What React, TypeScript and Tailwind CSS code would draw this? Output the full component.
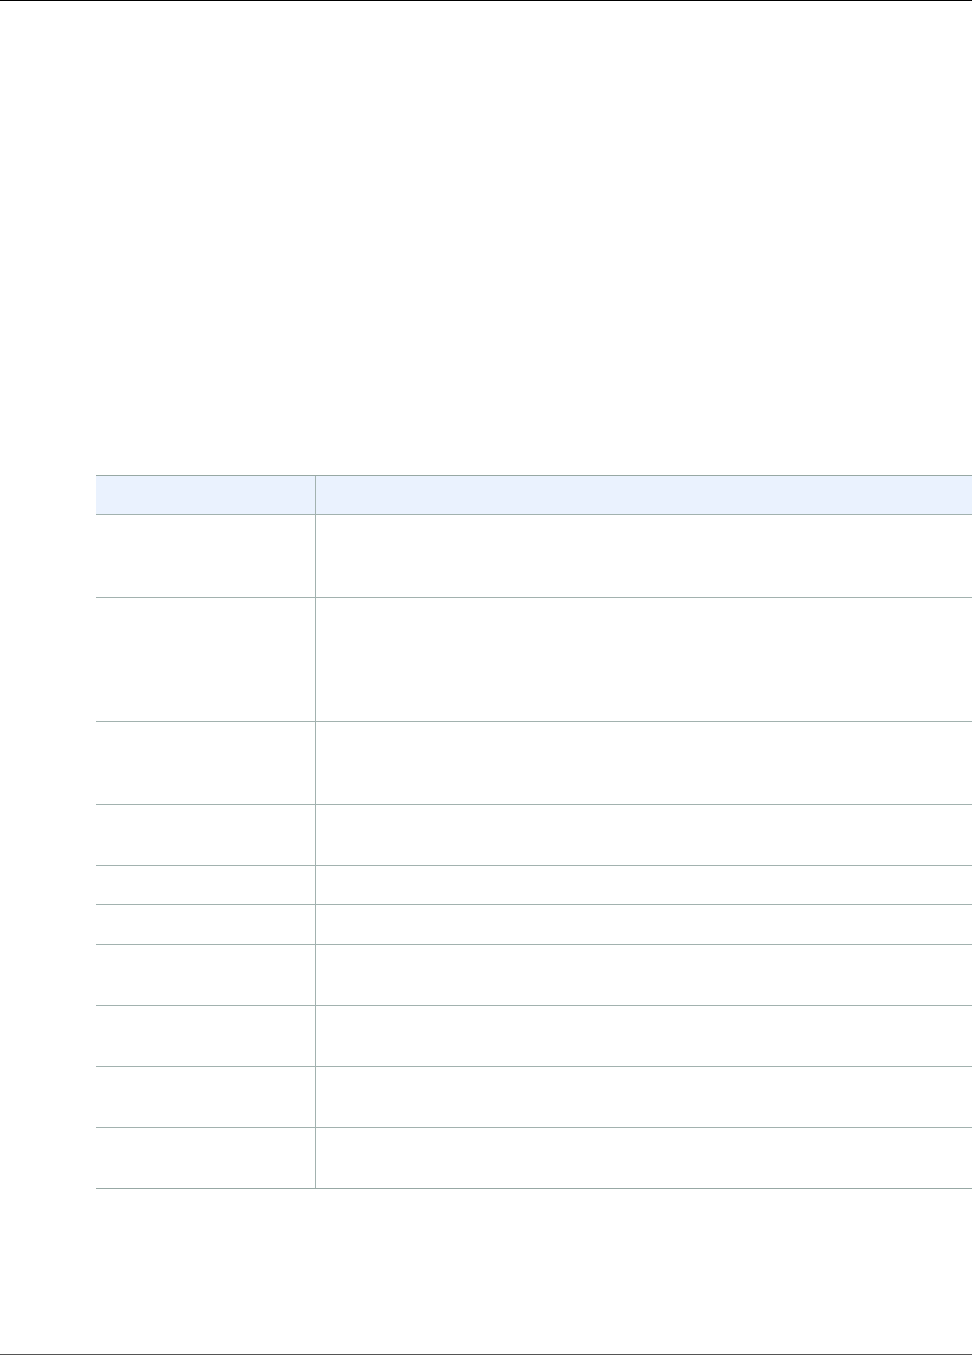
const rows = [83, 124, 83, 61, 39, 40, 61, 61, 61, 61];

const App = () => {
  return (
    <div className="flex h-[1355px] w-[972px] flex-col border-t border-b border-t-black border-b-[#555555] bg-white font-['Liberation_Sans',Arial,sans-serif]">
      {/* page body, table sits low on the page */}
      <div className="pt-[474px] pl-[96px]">
        <div className="border-t border-[#97a8a4]">
          {/* header row */}
          <div className="grid h-[39px] grid-cols-[220px_1fr] border-b border-[#a2b2af] bg-[#eaf2fe]">
            <div className="border-r border-[#a2b2af]" />
            <div />
          </div>
          {rows.map((h, i) => (
            <div
              key={i}
              style={{ height: h }}
              className={`grid grid-cols-[220px_1fr] border-b ${i === rows.length - 1 ? 'border-[#97a8a4]' : 'border-[#a2b2af]'}`}
            >
              <div className="border-r border-[#a2b2af]" />
              <div />
            </div>
          ))}
        </div>
      </div>
    </div>
  );
};

export default App;
